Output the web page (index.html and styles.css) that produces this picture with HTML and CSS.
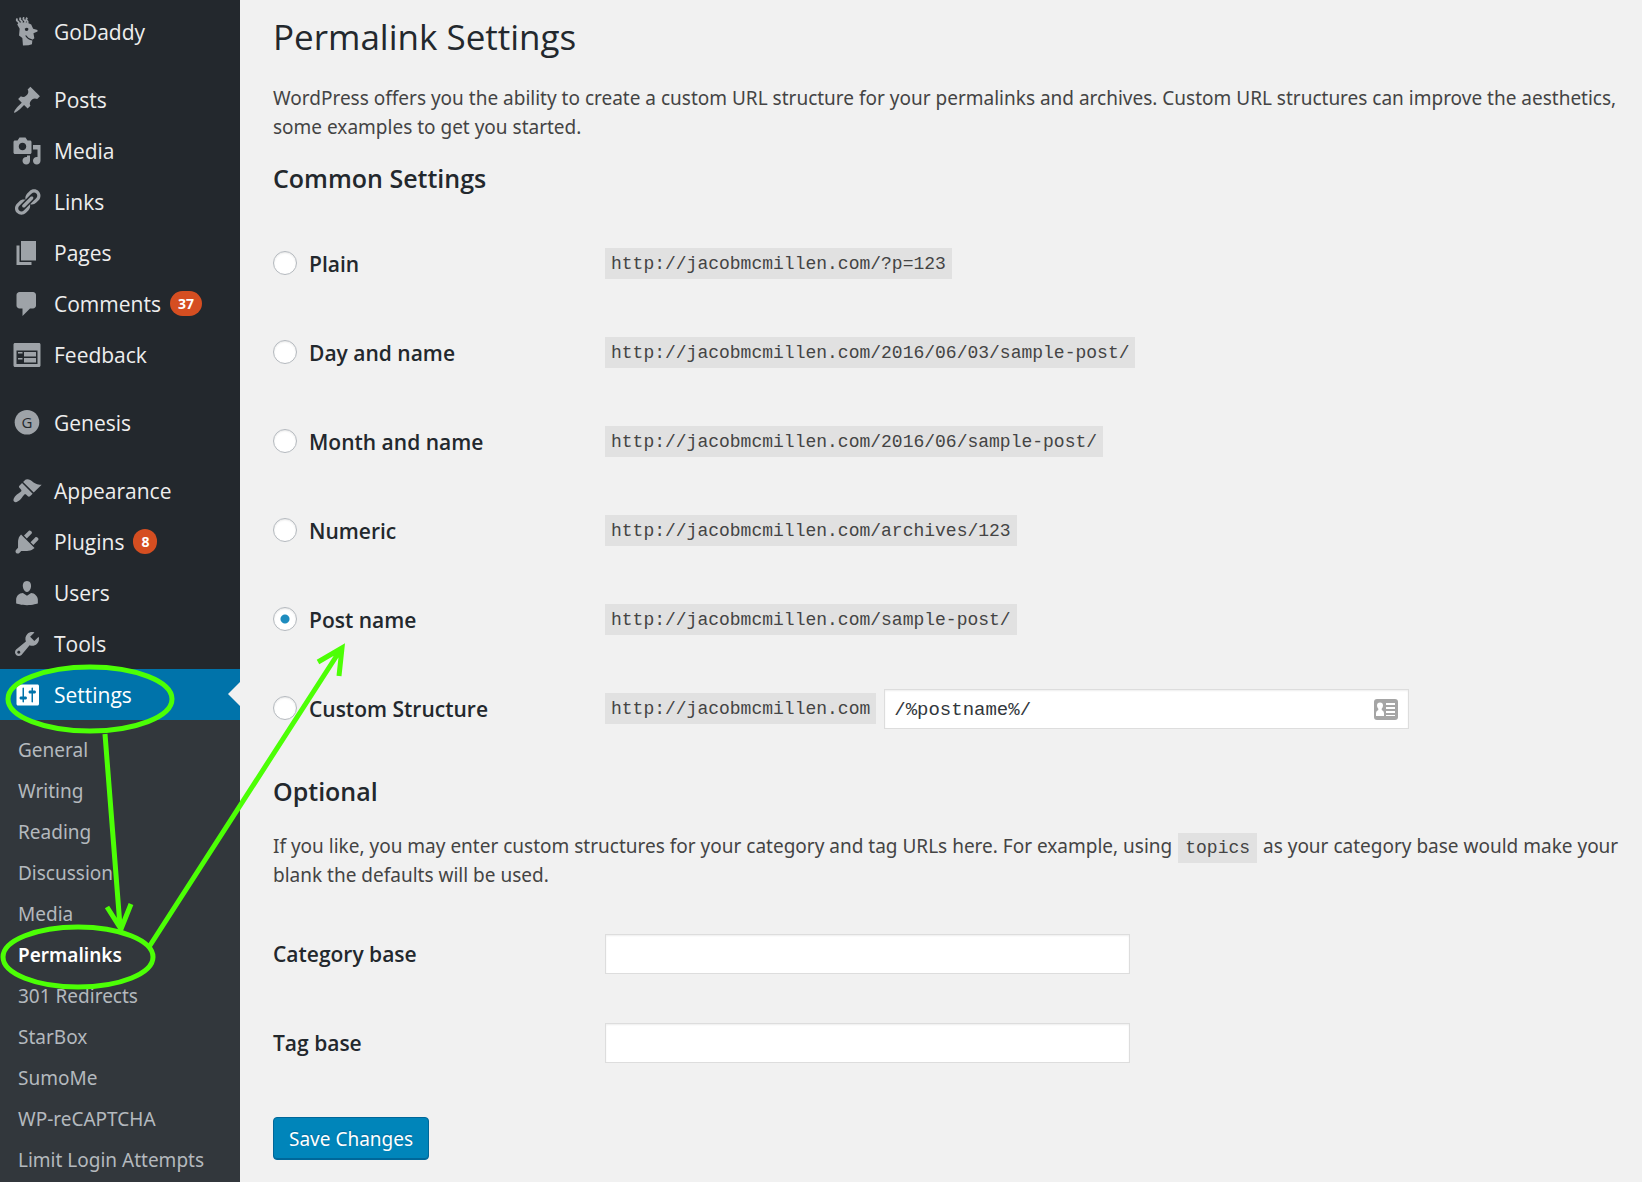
FILE: index.html
```
<!DOCTYPE html>
<html lang="en">
<head>
    <meta charset="utf-8">
    <meta name="viewport" content="width=device-width, initial-scale=1.0">
    <title>Permalink Settings</title>
    <link rel="stylesheet" href="styles.css">
</head>
<body>
    <div class="wrapper">
        <nav class="sidebar">
            <ul class="menu">
                <li><a href="#"><svg class="icon" viewBox="0 0 20 20"><path d="M3.600 1q-1 1.200.2 1.800t.3 1.500M5.800.4q-1 1.300.2 2t.2 1.600M8 .2q-1 1.300.2 2T8.300 4M10.200.5q-1.200 1.200-.2 2t0 1.600" fill="none" stroke="currentColor" stroke-width="1.200"/><path fill-rule="evenodd" d="M3.500 5l1-1.300h5.500l2.800 1.300 1.300 2.800 2.900.9v1l-2.700 1.200.6 3.300-1.300 1-.3 3-2.300.6-3.700.2-.4-5-2.200-1.700.4-4.500zM8.500 7.800q1.500-1.400 2.500 0 0 1.500-1.300 1.500-1.200 0-1.200-1.500zM8.800 12.500q1.500 2.700 4.700 3.200l.1-.7q-3-.8-4.200-2.900z"/></svg>GoDaddy</a></li>
                <li class="separator"></li>
                <li><a href="#"><svg class="icon" viewBox="0 0 20 20"><path d="M10.440 3.020l1.820-1.820 6.360 6.350-1.830 1.820c-1.050-.68-2.480-.57-3.410.36l-.75.75c-.92.93-1.040 2.350-.35 3.410l-1.830 1.820-2.410-2.410-2.800 2.790c-.42.42-3.380 2.710-3.800 2.290s1.860-3.390 2.280-3.810l2.790-2.790L4.100 9.360l1.830-1.820c1.050.69 2.480.57 3.400-.36l.75-.75c.93-.92 1.050-2.350.36-3.410z"/></svg>Posts</a></li>
                <li><a href="#"><svg class="icon" viewBox="0 0 20 20"><path fill-rule="evenodd" d="M13 11V4c0-.55-.45-1-1-1h-1.670L9 1H5L3.670 3H2c-.55 0-1 .45-1 1v7c0 .55.45 1 1 1h10c.55 0 1-.45 1-1zM7 4.500c1.380 0 2.500 1.120 2.500 2.500S8.380 9.500 7 9.500 4.500 8.380 4.500 7 5.620 4.500 7 4.500zM14 6h5v10.500c0 1.380-1.120 2.500-2.500 2.500S14 17.880 14 16.500s1.120-2.500 2.500-2.500c.17 0 .34.02.5.05V9h-3V6zm-4 8.050V13h2v3.500c0 1.380-1.120 2.500-2.500 2.500S7 17.880 7 16.500 8.120 14 9.500 14c.17 0 .34.02.5.05z"/></svg>Media</a></li>
                <li><a href="#"><svg class="icon" viewBox="0 0 20 20"><path d="M17.740 2.760c1.680 1.690 1.680 4.410 0 6.100l-1.530 1.520c-1.120 1.120-2.700 1.470-4.140 1.090l2.620-2.610.76-.77.76-.76c.84-.84.84-2.200 0-3.040-.84-.85-2.200-.85-3.040 0l-.77.76-3.380 3.380c-.37-1.440-.02-3.020 1.100-4.140l1.520-1.530c1.690-1.680 4.420-1.680 6.100 0zM8.590 13.430l5.340-5.340c.42-.42.42-1.100 0-1.520-.44-.43-1.130-.39-1.530 0l-5.330 5.340c-.42.42-.42 1.100 0 1.520.44.43 1.130.39 1.520 0zm-.76 2.290l4.140-4.150c.38 1.440.03 3.020-1.090 4.140l-1.520 1.530c-1.690 1.680-4.410 1.680-6.100 0-1.680-1.680-1.680-4.420 0-6.100l1.530-1.520c1.120-1.120 2.700-1.470 4.140-1.100l-4.140 4.150c-.85.84-.85 2.200 0 3.050.84.84 2.200.84 3.040 0z"/></svg>Links</a></li>
                <li><a href="#"><svg class="icon" viewBox="0 0 20 20"><path d="M6 15V2h10v13H6zm-1 1h8v2H3V5h2v11z"/></svg>Pages</a></li>
                <li><a href="#"><svg class="icon" viewBox="0 0 20 20"><path d="M5 2h9c1.100 0 2 .9 2 2v7c0 1.100-.9 2-2 2h-2l-5 5v-5H5c-1.100 0-2-.9-2-2V4c0-1.100.9-2 2-2z"/></svg>Comments <span class="count">37</span></a></li>
                <li><a href="#"><svg class="icon" viewBox="0 0 20 20"><path fill-rule="evenodd" d="M2 2h16c.55 0 1 .45 1 1v14c0 .55-.45 1-1 1H2c-.55 0-1-.45-1-1V3c0-.55.45-1 1-1zm15 14V7H3v9h14zM4 8v1h3V8H4zm4 0v3h8V8H8zm-4 4v1h3v-1H4zm4 0v3h8v-3H8z"/></svg>Feedback</a></li>
                <li class="separator"></li>
                <li><a href="#"><svg class="icon" viewBox="0 0 20 20"><circle cx="10" cy="9.500" r="8.200"/><text class="icon-letter" x="10" y="13" text-anchor="middle">G</text></svg>Genesis</a></li>
                <li class="separator"></li>
                <li><a href="#"><svg class="icon" viewBox="0 0 20 20"><path d="M14.480 11.060L7.410 3.990l1.500-1.500c.5-.56 2.300-.47 3.510.32 1.210.8 1.430 1.280 2.910 2.100 1.180.64 2.450 1.260 4.450.85zm-.71.71L6.700 4.700 4.930 6.470c-.39.39-.39 1.020 0 1.410l1.060 1.060c.39.39.39 1.030 0 1.420-.6.6-1.430 1.110-2.210 1.690-.35.26-.7.53-1.010.84C1.430 14.230.4 16.080 1.400 17.070c.99 1 2.840-.03 4.180-1.360.31-.31.58-.66.85-1.020.57-.78 1.080-1.610 1.690-2.210.39-.39 1.020-.39 1.410 0l1.060 1.060c.39.39 1.020.39 1.410 0z"/></svg>Appearance</a></li>
                <li><a href="#"><svg class="icon" viewBox="0 0 20 20"><path d="M13.110 4.360L9.870 7.600 8 5.730l3.240-3.240c.35-.34 1.050-.2 1.560.32.52.51.66 1.210.31 1.550zm-8 1.770l.91-1.120 9.010 9.010-1.190.84c-.71.71-2.630 1.160-3.820 1.160H6.140L4.900 17.260c-.59.59-1.540.59-2.120 0-.59-.58-.59-1.530 0-2.120l1.240-1.240v-3.880c0-1.130.4-3.190 1.090-3.890zm7.260 3.970l3.240-3.240c.34-.35 1.040-.21 1.550.31.52.51.66 1.210.31 1.550l-3.240 3.250z"/></svg>Plugins <span class="count">8</span></a></li>
                <li><a href="#"><svg class="icon" viewBox="0 0 20 20"><path d="M10 9.250c-2.270 0-2.730-3.440-2.730-3.440C7 4.020 7.820 2 9.970 2c2.160 0 2.980 2.020 2.710 3.810 0 0-.41 3.440-2.680 3.440zm0 2.570L12.720 10c2.390 0 4.520 2.330 4.520 4.530v2.490s-3.650 1.130-7.240 1.130c-3.650 0-7.240-1.130-7.240-1.130v-2.490c0-2.250 1.940-4.480 4.470-4.480z"/></svg>Users</a></li>
                <li><a href="#"><svg class="icon" viewBox="0 0 20 20"><path fill-rule="evenodd" d="M16.680 9.770c-1.340 1.340-3.300 1.670-4.950.99l-5.410 6.520c-.99.99-2.590.99-3.580 0s-.99-2.590 0-3.570l6.520-5.420c-.68-1.650-.35-3.610.99-4.950 1.280-1.280 3.120-1.620 4.720-1.060l-2.890 2.890 2.820 2.820 2.860-2.870c.53 1.580.18 3.390-1.080 4.650zM3.810 16.210c.4.39 1.040.39 1.430 0 .4-.4.4-1.040 0-1.430-.39-.4-1.030-.4-1.430 0-.39.39-.39 1.030 0 1.430z"/></svg>Tools</a></li>
                <li class="current"><a href="#"><svg class="icon" viewBox="0 0 20 20"><path fill-rule="evenodd" d="M18 16V4c0-.55-.45-1-1-1H4c-.55 0-1 .45-1 1v12c0 .55.45 1 1 1h13c.55 0 1-.45 1-1zM8 11h1c.55 0 1 .45 1 1s-.45 1-1 1H8v1.500c0 .28-.22.5-.5.5s-.5-.22-.5-.5V13H6c-.55 0-1-.45-1-1s.45-1 1-1h1V5.500c0-.28.22-.5.5-.5s.5.22.5.5V11zm5-2h-1c-.55 0-1-.45-1-1s.45-1 1-1h1V5.500c0-.28.22-.5.5-.5s.5.22.5.5V7h1c.55 0 1 .45 1 1s-.45 1-1 1h-1v5.500c0 .28-.22.5-.5.5s-.5-.22-.5-.5V9z"/></svg>Settings</a></li>
            </ul>
            <ul class="submenu">
                <li><a href="#">General</a></li>
                <li><a href="#">Writing</a></li>
                <li><a href="#">Reading</a></li>
                <li><a href="#">Discussion</a></li>
                <li><a href="#">Media</a></li>
                <li><a href="#" class="active">Permalinks</a></li>
                <li><a href="#">301 Redirects</a></li>
                <li><a href="#">StarBox</a></li>
                <li><a href="#">SumoMe</a></li>
                <li><a href="#">WP-reCAPTCHA</a></li>
                <li><a href="#">Limit Login Attempts</a></li>
            </ul>
        </nav>

        <main class="content">
            <h1>Permalink Settings</h1>
            <p>WordPress offers you the ability to create a custom URL structure for your permalinks and archives. Custom URL structures can improve the aesthetics,<br>some examples to get you started.</p>

            <form>
                <h2>Common Settings</h2>
                <table class="form-table">
                    <tr>
                        <th><label><input type="radio" name="structure">Plain</label></th>
                        <td><code>http://jacobmcmillen.com/?p=123</code></td>
                    </tr>
                    <tr>
                        <th><label><input type="radio" name="structure">Day and name</label></th>
                        <td><code>http://jacobmcmillen.com/2016/06/03/sample-post/</code></td>
                    </tr>
                    <tr>
                        <th><label><input type="radio" name="structure">Month and name</label></th>
                        <td><code>http://jacobmcmillen.com/2016/06/sample-post/</code></td>
                    </tr>
                    <tr>
                        <th><label><input type="radio" name="structure">Numeric</label></th>
                        <td><code>http://jacobmcmillen.com/archives/123</code></td>
                    </tr>
                    <tr>
                        <th><label><input type="radio" name="structure" checked>Post name</label></th>
                        <td><code>http://jacobmcmillen.com/sample-post/</code></td>
                    </tr>
                    <tr>
                        <th><label><input type="radio" name="structure">Custom Structure</label></th>
                        <td>
                            <div class="custom">
                                <code>http://jacobmcmillen.com</code>
                                <div class="field">
                                    <input type="text" class="text-input" aria-label="Custom structure" value="/%postname%/">
                                    <svg class="card-icon" viewBox="0 0 24 21"><rect width="24" height="21" rx="3" fill="#a5a5a5"/><path fill="#fff" d="M6 3.500a3 3 0 0 1 3 3q0 2-1.300 3.200v1.300q2.300.8 2.300 3V17H2v-3q0-2.200 2.300-3V9.700Q3 8.500 3 6.500a3 3 0 0 1 3-3zM12 4h9v2h-9zM12 8h9v2h-9zM12 12h9v2h-9zM12 16h9v1h-9z"/></svg>
                                </div>
                            </div>
                        </td>
                    </tr>
                </table>

                <h2>Optional</h2>
                <p>If you like, you may enter custom structures for your category and tag URLs here. For example, using <code>topics</code> as your category base would make your<br>blank the defaults will be used.</p>

                <table class="form-table">
                    <tr>
                        <th><label for="category">Category base</label></th>
                        <td><input type="text" class="text-input" id="category"></td>
                    </tr>
                    <tr>
                        <th><label for="tag">Tag base</label></th>
                        <td><input type="text" class="text-input" id="tag"></td>
                    </tr>
                </table>

                <button type="submit" class="save">Save Changes</button>
            </form>
        </main>

        <!-- Settings -> Permalinks -> Post name -->
        <svg class="arrows" width="400" height="1000" viewBox="0 0 400 1000">
            <ellipse cx="90" cy="699" rx="82" ry="32"/>
            <path d="M105 734L120 926M107 907L121 929L131 904"/>
            <ellipse cx="78" cy="957" rx="75" ry="30"/>
            <path d="M149 947L341 649M318 662L342 648L339 676"/>
        </svg>
    </div>
</body>
</html>
```
FILE: styles.css
```
* {
    box-sizing: border-box;
}
body {
    margin: 0;
    background: #f1f1f1;
    color: #444;
    font-family: "Noto Sans", "Open Sans", sans-serif;
    font-size: 19px;
    overflow-x: hidden;
}
.wrapper {
    position: relative;
    display: flex;
    min-height: 100vh;
    overflow: hidden;
}

/* sidebar */
.sidebar {
    flex: 0 0 240px;
    background: #23282d;
    display: flex;
    flex-direction: column;
}
.sidebar ul {
    list-style: none;
    margin: 0;
    padding: 0;
}
.sidebar a {
    color: #eee;
    text-decoration: none;
}
.sidebar .menu {
    padding-top: 6px;
}
.menu a {
    display: flex;
    align-items: center;
    height: 51px;
    padding-left: 12px;
    font-family: "Open Sans", sans-serif;
    font-size: 21px;
}
.menu .separator {
    height: 17px;
}
.icon {
    width: 30px;
    height: 30px;
    margin-right: 12px;
    fill: currentColor;
    color: #9ea3a8;
}
.icon-letter {
    fill: #23282d;
    font-size: 10px;
}
.count {
    margin-left: 9px;
    padding: 0 8px;
    border-radius: 13px;
    background: #d54e21;
    color: #fff;
    font-size: 14px;
    font-weight: 700;
    line-height: 25px;
}
.menu .current {
    position: relative;
    background: #0073aa;
}
.current a,
.current .icon {
    color: #fff;
}
.current::after {
    content: "";
    position: absolute;
    right: 0;
    top: 13px;
    border: 12px solid transparent;
    border-left: 0;
    border-right-color: #f1f1f1;
}
.sidebar .submenu {
    flex: 1;
    padding-top: 10px;
    background: #32373c;
}
.submenu a {
    display: block;
    padding-left: 18px;
    line-height: 41px;
    color: #b4b9be;
}
.submenu .active {
    color: #fff;
    font-weight: 600;
}

/* content */
.content {
    flex: 1;
    min-width: 0;
    padding: 14px 0 0 33px;
}
h1 {
    margin: 0;
    color: #23282d;
    font-family: "Open Sans", sans-serif;
    font-size: 35px;
    font-weight: 400;
    line-height: 46px;
}
h2 {
    margin: 0;
    color: #23282d;
    font-family: "Open Sans", sans-serif;
    font-size: 25px;
    font-weight: 600;
    line-height: 34px;
}
p {
    margin: 24px 0 19px;
    line-height: 29px;
    white-space: nowrap;
}
code {
    display: inline-block;
    padding: 2px 6px 0;
    background: #e1e1e1;
    font-family: "Liberation Mono", monospace;
    font-size: 18px;
    line-height: 29px;
    vertical-align: middle;
}
p code {
    display: inline;
    margin: 0 1px;
    padding: 5px 7px;
    line-height: 1;
    vertical-align: baseline;
}
.form-table {
    width: 100%;
    margin: 0 0 21px;
    border-collapse: collapse;
}
h2 + .form-table {
    margin-top: 24px;
}
.form-table th,
.form-table td {
    height: 89px;
    padding: 0;
    text-align: left;
    vertical-align: middle;
}
.form-table th {
    width: 332px;
    color: #23282d;
    font-family: "Open Sans", sans-serif;
    font-size: 21px;
    font-weight: 600;
}
.form-table label {
    display: flex;
    align-items: center;
}
input[type="radio"] {
    appearance: none;
    width: 24px;
    height: 24px;
    margin: 0 12px 2px 0;
    border: 1px solid #b4b9be;
    border-radius: 50%;
    background: #fff;
    box-shadow: inset 0 1px 2px rgba(0,0,0,0.1);
}
input[type="radio"]:checked {
    background: radial-gradient(circle, #1e8cbe 4px, #fff 5px);
}
.custom {
    display: flex;
    align-items: center;
    gap: 8px;
}
.field {
    position: relative;
}
.text-input {
    display: block;
    width: 525px;
    height: 40px;
    padding: 2px 9px 0;
    border: 1px solid #ddd;
    background: #fff;
    box-shadow: inset 0 1px 2px rgba(0,0,0,0.07);
    color: #32373c;
    font-family: "Liberation Mono", monospace;
    font-size: 19px;
}
.card-icon {
    position: absolute;
    right: 11px;
    top: 10px;
    width: 24px;
    height: 21px;
}
.save {
    display: block;
    height: 43px;
    margin-top: 30px;
    padding: 0 15px;
    border: 1px solid #006799;
    border-radius: 4px;
    background: #0085ba;
    box-shadow: inset 0 -1px 0 #006799;
    color: #fff;
    font-family: inherit;
    font-size: 19px;
    text-shadow: 0 -1px 1px #006799;
    cursor: pointer;
}

/* hand drawn path over the page */
.arrows {
    position: absolute;
    left: 0;
    top: 0;
    fill: none;
    stroke: #4cff05;
    stroke-width: 5;
    pointer-events: none;
}
```
